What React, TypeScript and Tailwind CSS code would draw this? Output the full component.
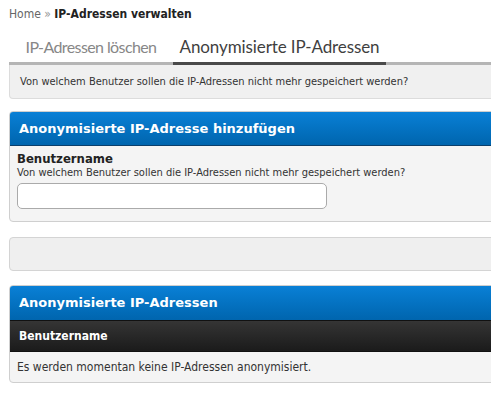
export default function App() {
  const body = { fontFamily: 'Tahoma, "DejaVu Sans Condensed", "DejaVu Sans", sans-serif' }
  const head = { fontFamily: 'Verdana, "DejaVu Sans", sans-serif' }
  return (
    <div className="h-[406px] w-[491px] overflow-hidden bg-white">
      <div className="w-[520px] pl-[9px]" style={body}>
        <div className="pt-[6px] text-[12px] leading-[16px]">
          <span className="text-[#666]">Home</span>
          <span className="text-[#999]"> » </span>
          <span className="font-bold text-[#222]">IP-Adressen verwalten</span>
        </div>

        <div className="mt-[14px] flex items-end border-b-[3px] border-[#b5b5b5]" style={{ fontFamily: 'Lato, "Noto Sans", sans-serif' }}>
          <div className="w-[164px] pb-[4px] text-center text-[16px] leading-[22px] tracking-[-0.6px] text-[#878787]">IP-Adressen löschen</div>
          <div className="-mb-[3px] w-[213px] border-b-[3px] border-[#4a4a4a] pb-[4px] text-center text-[17px] leading-[22px] tracking-[-0.1px] text-[#3f3f3f]">Anonymisierte IP-Adressen</div>
        </div>

        <div className="h-[34px] rounded-b-[4px] border border-t-0 border-[#dcdcdc] bg-[#f0f0f0] pl-[10px] text-[11px] leading-[33px] text-[#333]">
          Von welchem Benutzer sollen die IP-Adressen nicht mehr gespeichert werden?
        </div>

        <div className="mt-[12px] overflow-hidden rounded-[4px] border border-[#cfcfcf] bg-[#f4f4f4]">
          <div className="h-[34px] border-b border-[#0b3f6b] bg-gradient-to-b from-[#0a80d6] to-[#0065ae] pl-[9px] text-[13px] font-bold leading-[33px] text-white" style={head}>
            Anonymisierte IP-Adresse hinzufügen
          </div>
          <div className="px-[7px] pb-[12px] pt-[5px]">
            <div className="text-[13px] font-bold leading-[15px] text-[#222]">Benutzername</div>
            <div className="text-[11px] leading-[14px] text-[#333]">Von welchem Benutzer sollen die IP-Adressen nicht mehr gespeichert werden?</div>
            <input type="text" className="mt-[3px] block h-[26px] w-[310px] rounded-[5px] border border-[#aaa] bg-white" />
          </div>
        </div>

        <div className="mt-[15px] h-[34px] rounded-[4px] border border-[#d4d4d4] bg-[#efefef]" />

        <div className="mt-[14px] overflow-hidden rounded-[4px] border border-[#cfcfcf] bg-[#f4f4f4]">
          <div className="h-[34px] bg-gradient-to-b from-[#0a80d6] to-[#0065ae] pl-[9px] text-[13px] font-bold leading-[34px] text-white" style={head}>
            Anonymisierte IP-Adressen
          </div>
          <div className="h-[32px] border-t border-b border-[#111] bg-gradient-to-b from-[#353535] to-[#1b1b1b] pl-[9px] text-[12px] font-bold leading-[30px] text-white">
            Benutzername
          </div>
          <div className="h-[30px] pl-[7px] text-[12px] leading-[30px] text-[#333]">
            Es werden momentan keine IP-Adressen anonymisiert.
          </div>
        </div>
      </div>
    </div>
  )
}
